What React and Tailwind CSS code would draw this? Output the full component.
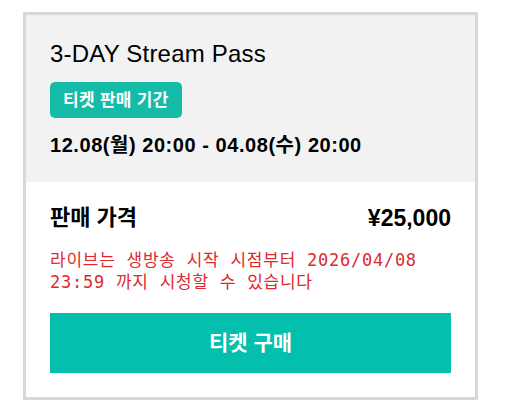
export default function App() {
  return (
    <div className="w-[505px] h-[416px] bg-white pt-[12px] pl-[23px]" style={{ fontFamily: '"Liberation Sans", "Noto Sans CJK KR", sans-serif' }}>
      <div className="w-[455px] h-[388px] border-[3px] border-[#d8d8d8] flex flex-col bg-white">
        <div className="bg-[#f2f2f2] h-[167px] px-[24px] pt-[25px] flex flex-col items-start">
          <div className="text-[24px] text-black leading-[28px] tracking-[0.2px]">3-DAY Stream Pass</div>
          <div className="mt-[14px] flex items-center h-[36px] px-[13px] rounded-[5px] bg-[#14bba6] text-white text-[17px] font-bold leading-none tracking-[0.3px]">티켓 판매 기간</div>
          <div className="mt-[14px] text-[20px] font-bold text-black leading-[26px] tracking-[0.55px]">12.08(월) 20:00 - 04.08(수) 20:00</div>
        </div>
        <div className="px-[24px] pt-[21px]">
          <div className="flex justify-between items-center h-[30px]">
            <span className="text-[22px] font-bold text-black leading-[30px]">판매 가격</span>
            <span className="text-[23px] font-bold text-black leading-[30px]">¥25,000</span>
          </div>
          <div className="mt-[16px] text-[17px] text-[#dc2a2e] leading-[22px] tracking-[0.75px]" style={{ fontFamily: '"DejaVu Sans Mono", "Noto Sans CJK KR", monospace' }}>
            라이브는 생방송 시작 시점부터 2026/04/08<br />23:59 까지 시청할 수 있습니다
          </div>
          <button className="mt-[20px] w-full h-[60px] bg-[#02bfae] text-white text-[21px] font-bold">티켓 구매</button>
        </div>
      </div>
    </div>
  );
}
